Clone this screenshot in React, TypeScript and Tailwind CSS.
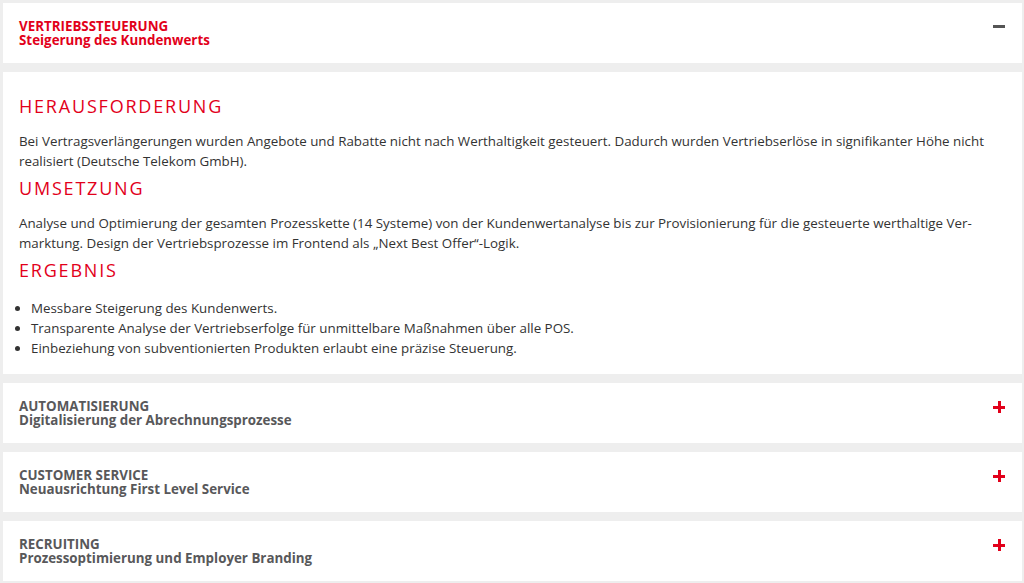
import React from 'react';

const red = 'text-[#e2001a]';

const items = [
  { title: 'AUTOMATISIERUNG', sub: 'Digitalisierung der Abrechnungsprozesse' },
  { title: 'CUSTOMER SERVICE', sub: 'Neuausrichtung First Level Service' },
  { title: 'RECRUITING', sub: 'Prozessoptimierung und Employer Branding' },
];

const Header: React.FC<{ title: string; sub: string; open?: boolean }> = ({ title, sub, open }) => (
  <div className="bg-white h-[60px] flex items-center justify-between pl-4 pr-[17px]">
    <div className={`text-[13.35px] leading-[14px] font-bold ${open ? red : 'text-[#58585a]'}`}>
      <div>{title}</div>
      <div>{sub}</div>
    </div>
    {open ? (
      <div className="w-3 h-[3px] bg-[#555] mb-[14px]" />
    ) : (
      <div className="relative w-3 h-3 mb-[12px]">
        <div className="absolute left-0 top-[5px] w-3 h-[2.5px] bg-[#e2001a]" />
        <div className="absolute top-0 left-[5px] h-3 w-[2.5px] bg-[#e2001a]" />
      </div>
    )}
  </div>
);

export default function App() {
  return (
    <div className="min-h-[583px] bg-[#eeeeee] px-[3px] pr-[2px] pt-[3px] flex flex-col gap-[9px] font-['Open_Sans',sans-serif]">
      <Header title="VERTRIEBSSTEUERUNG" sub="Steigerung des Kundenwerts" open />

      <div className="bg-white pl-4 pr-6 pt-[22px] pb-4 text-[13.35px] leading-5 text-[#333]">
        <h2 className={`text-[18px] leading-6 tracking-[1.8px] mb-[13px] ${red}`}>HERAUSFORDERUNG</h2>
        <p className="mb-[5px]">
          Bei Vertragsverlängerungen wurden Angebote und Rabatte nicht nach Werthaltigkeit gesteuert. Dadurch wurden Vertriebserlöse in signifikanter Höhe nicht realisiert (Deutsche Telekom GmbH).
        </p>
        <h2 className={`text-[18px] leading-6 tracking-[1.8px] mb-[13px] ${red}`}>UMSETZUNG</h2>
        <p className="mb-[5px]">
          Analyse und Optimierung der gesamten Prozesskette (14 Systeme) von der Kundenwertanalyse bis zur Provisionierung für die gesteuerte werthaltige Ver-<br />
          marktung. Design der Vertriebsprozesse im Frontend als „Next Best Offer“-Logik.
        </p>
        <h2 className={`text-[18px] leading-6 tracking-[1.8px] mb-4 ${red}`}>ERGEBNIS</h2>
        <ul className="list-disc pl-3 ml-0">
          <li>Messbare Steigerung des Kundenwerts.</li>
          <li>Transparente Analyse der Vertriebserfolge für unmittelbare Maßnahmen über alle POS.</li>
          <li>Einbeziehung von subventionierten Produkten erlaubt eine präzise Steuerung.</li>
        </ul>
      </div>

      {items.map((it) => (
        <Header key={it.title} title={it.title} sub={it.sub} />
      ))}
    </div>
  );
}
